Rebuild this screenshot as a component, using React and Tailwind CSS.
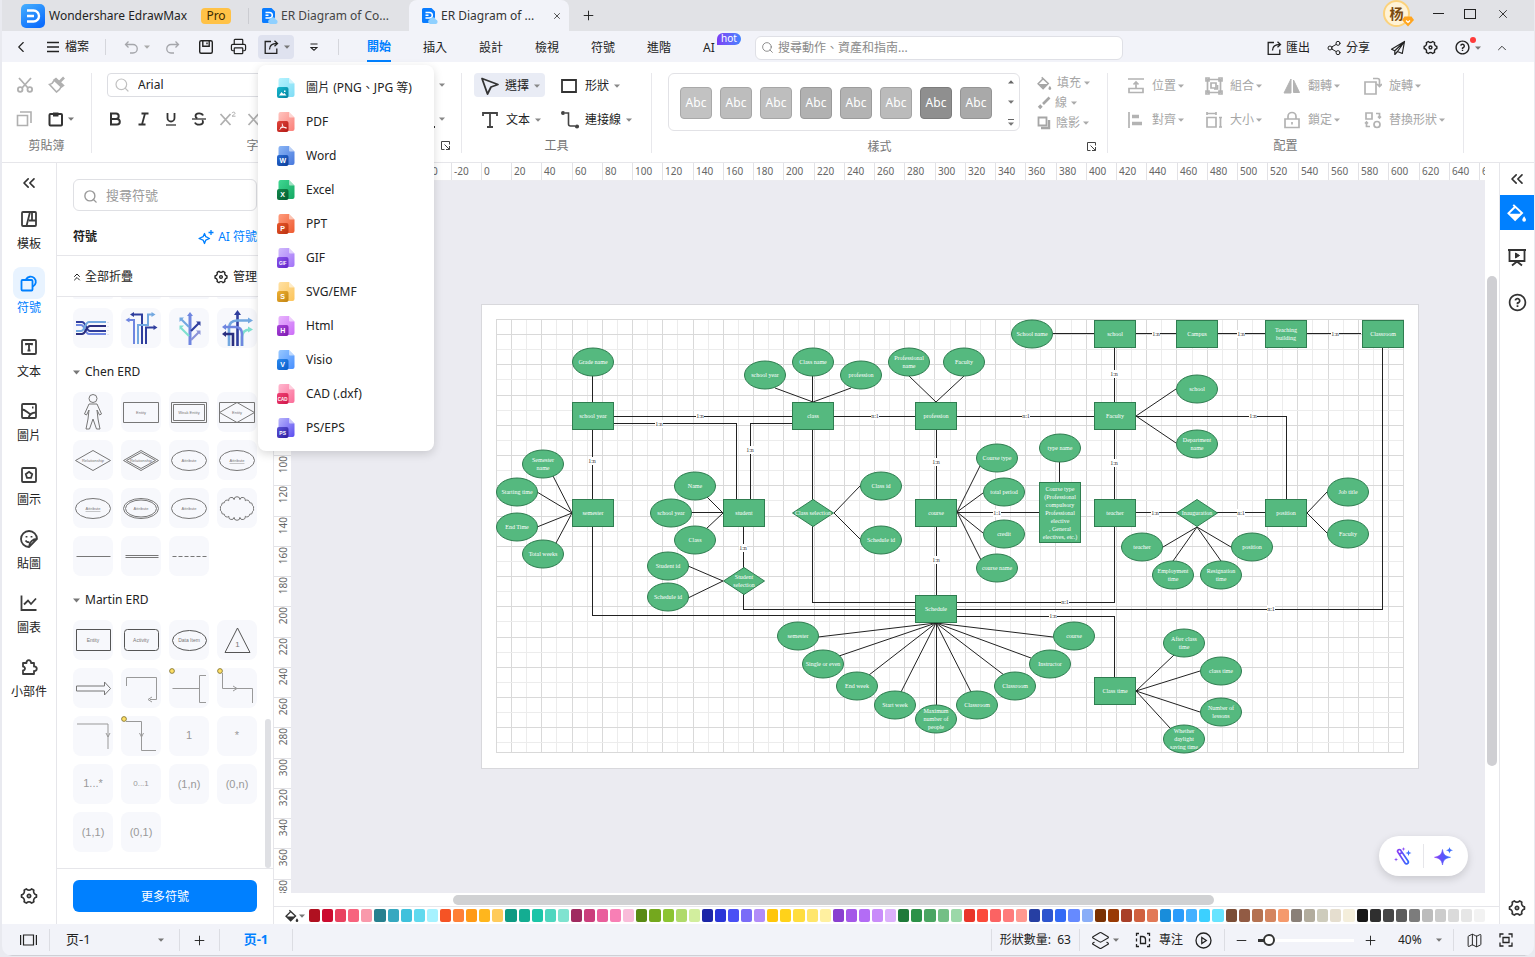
import {
    ChevronLeft,
    ChevronUp,
    ChevronsLeft,
    ChevronsUp,
    Layers2,
    Map as MapIcon,
    Minus,
    Plus,
    Printer,
    Search,
    Share2,
    X,
} from "lucide-react";
import { RiSettings4Line, RiQuestionLine } from "react-icons/ri";

/* ---------- small helpers ---------- */

const Svg = ({ w = 18, h = w, sw = 1.5, className = "", children }) => (
    <svg
        width={w}
        height={h}
        viewBox={`0 0 ${w} ${h}`}
        fill="none"
        stroke="currentColor"
        strokeWidth={sw}
        className={`shrink-0 ${className}`}
        aria-hidden="true"
    >
        {children}
    </svg>
);

const Caret = ({ className = "text-[#777]" }) => (
    <svg width="6" height="4" viewBox="0 0 6 4" className={`shrink-0 ${className}`} aria-hidden="true">
        <path d="M0 0.5h6L3 3.8z" fill="currentColor" />
    </svg>
);

const ExportIcon = () => (
    <Svg w={16} sw={1.3}>
        <path d="M8 2.5H2.2v11.8h11.6V9.5" />
        <path d="M6.5 10.5c0-4 2.5-6 7.5-6" />
        <path d="M11.5 1.8l3 2.7-3 2.7" />
    </Svg>
);

const BucketIcon = ({ size = 16 }) => (
    <svg width={size} height={size} viewBox="0 0 16 16" className="shrink-0" aria-hidden="true">
        <path d="M5 1.5l7 6.5-5.5 5.5L1.2 8.2 6.5 3" fill="none" stroke="currentColor" strokeWidth="1.6" />
        <path d="M2 8.5h9.5L6.5 13.2z" fill="currentColor" />
        <path d="M13.7 10.5c1 1.5 1.5 2.2 1.5 2.9a1.5 1.5 0 0 1-3 0c0-.7.5-1.4 1.5-2.9z" fill="currentColor" />
    </svg>
);

const Launcher = () => (
    <Svg w={9} sw={1} className="text-[#444]">
        <path d="M3.5 8.5h-3v-8h8v3" />
        <path d="M3.5 3.5l5 5M8.5 5v3.5H5" />
    </Svg>
);

/* ---------- title bar ---------- */

const DocIcon = () => (
    <svg width="16" height="16" viewBox="0 0 16 16" className="shrink-0" aria-hidden="true">
        <path d="M1.5 0h8L13 3.5V15H1.5A1.5 1.5 0 0 1 0 13.5V1.5A1.5 1.5 0 0 1 1.5 0z" fill="#0a7cff" />
        <path d="M3.5 4.5h4a2.8 2.8 0 0 1 0 5.6h-4M3.5 7.3h3" fill="none" stroke="#fff" strokeWidth="1.5" />
        <path d="M8 16a2.6 2.6 0 0 1 0-5 3.2 3.2 0 0 1 5.8.4A2.4 2.4 0 0 1 14 16z" fill="#8fd0ff" />
    </svg>
);

const TitleBar = () => (
    <header className="flex h-[31px] shrink-0 items-center bg-[#e1e2e6] pl-[19px] text-[#1f1f1f]">
        <svg width="24" height="24" viewBox="0 0 24 24" className="shrink-0" aria-hidden="true">
            <defs>
                <linearGradient id="logo" x1="0" y1="0" x2="0.6" y2="1">
                    <stop offset="0" stopColor="#45b0ff" />
                    <stop offset="1" stopColor="#0d6efd" />
                </linearGradient>
            </defs>
            <rect width="24" height="24" rx="5" fill="url(#logo)" />
            <path d="M6 6.5h6.5a5.5 5.5 0 0 1 0 11H6M6 12h7" fill="none" stroke="#fff" strokeWidth="2.4" />
        </svg>
        <h1 className="ml-1 w-[152px] whitespace-nowrap text-xs">Wondershare EdrawMax</h1>
        <span className="flex h-4 w-[30px] items-center justify-center rounded bg-[#ffc247] text-xs text-[#3d2a00]">Pro</span>
        <span className="ml-[17px] h-4 w-px bg-[#cbccd1]" />
        <button className="flex w-[160px] items-center gap-[3px] self-stretch pl-[13px] text-xs text-[#444]">
            <DocIcon />
            ER Diagram of Co...
        </button>
        <div className="flex w-[160px] items-center gap-[3px] self-stretch rounded-t-lg bg-[#f2f3f9] pl-[13px] text-xs text-[#333]">
            <DocIcon />
            <span className="grow">ER Diagram of ...</span>
            <button aria-label="Close tab" className="mr-[7px]">
                <X size={10} strokeWidth={2} />
            </button>
        </div>
        <button aria-label="New tab" className="ml-3">
            <Plus size={15} strokeWidth={1.5} />
        </button>
        <div className="ml-auto flex items-center pb-1 pr-6">
            <button aria-label="Account" className="relative mr-[22px] flex size-[27px] items-center justify-center rounded-full border-2 border-[#fbd27c] bg-[#fff3d6] text-sm font-bold text-[#7a4a10]">
                杨
                <svg width="12" height="11" viewBox="0 0 12 11" className="absolute -bottom-0.5 -right-1.5" aria-hidden="true">
                    <path d="M2.5.5h7L12 4l-6 6.500L0 4z" fill="#ffa51f" />
                    <path d="M4 4.500l2 2 2-2" fill="none" stroke="#fff" strokeWidth="1.2" />
                </svg>
            </button>
            <button aria-label="Minimize" className="mr-5 flex w-3 justify-center">
                <span className="h-px w-[11px] bg-[#222]" />
            </button>
            <button aria-label="Maximize" className="mr-5 h-[10px] w-3 border border-[#222]" />
            <button aria-label="Close">
                <X size={14} strokeWidth={1.5} />
            </button>
        </div>
    </header>
);

/* ---------- export menu ---------- */

const exportItems = [
    { label: "圖片 (PNG、JPG 等)", tag: "", page: ["#b5f3ff", "#7fdcf5"], badge: ["#16b9cf", "#06829f"] },
    { label: "PDF", tag: "", pdf: true, page: ["#ffc5c0", "#fb7f78"], badge: ["#e2453c", "#b31a15"] },
    { label: "Word", tag: "W", page: ["#8bb6f6", "#4878dd"], badge: ["#2b6bd4", "#0c3f99"] },
    { label: "Excel", tag: "X", page: ["#3fd792", "#15a862"], badge: ["#128a4d", "#055c30"] },
    { label: "PPT", tag: "P", page: ["#ff9c7d", "#ee5a30"], badge: ["#e8562b", "#bb3311"] },
    { label: "GIF", tag: "GIF", page: ["#d0bafc", "#a272f8"], badge: ["#8a54ec", "#6127c8"] },
    { label: "SVG/EMF", tag: "S", page: ["#ffe1a4", "#fcc45a"], badge: ["#eeb032", "#c28413"] },
    { label: "Html", tag: "H", page: ["#e8b5fd", "#cc6df8"], badge: ["#a944dc", "#7c1bae"] },
    { label: "Visio", tag: "V", page: ["#98c8ff", "#478fff"], badge: ["#2a8af0", "#0a5cc8"] },
    { label: "CAD (.dxf)", tag: "CAD", page: ["#ffb8cf", "#fb6c98"], badge: ["#f14276", "#cf1748"] },
    { label: "PS/EPS", tag: "PS", page: ["#b9b5fc", "#5a4cf0"], badge: ["#5a52d8", "#2f1f9e"] },
];

const FileIcon = ({ id, item }) => (
    <svg width="18" height="20" viewBox="0 0 18 20" className="shrink-0" aria-hidden="true">
        <defs>
            <linearGradient id={`page${id}`} x1="0" y1="0" x2="1" y2="1">
                <stop offset="0" stopColor={item.page[0]} />
                <stop offset="1" stopColor={item.page[1]} />
            </linearGradient>
            <linearGradient id={`badge${id}`} x1="0" y1="0" x2="1" y2="1">
                <stop offset="0" stopColor={item.badge[0]} />
                <stop offset="1" stopColor={item.badge[1]} />
            </linearGradient>
        </defs>
        <path d="M3.500 0H12l5.500 5.500V17a2 2 0 0 1-2 2h-12a2 2 0 0 1-2-2V2a2 2 0 0 1 2-2z" fill={`url(#page${id})`} />
        <path d="M12 0l5.500 5.500H13a1 1 0 0 1-1-1z" fill="#fff" opacity=".55" />
        <rect y="9" width="11.500" height="11" rx="2" fill={`url(#badge${id})`} />
        {id === 0 && <path d="M2 17.500l2.500-3.500 1.800 2 1-1 2.200 2.500z M7 12.500h1.500v1.500H7z" fill="#fff" />}
        {item.pdf && (
            <path d="M5.200 11.500c.8 2.500-.5 5-2.700 6M5.400 13c.5 2 2 3 4.200 3.200M3 16c2-.8 4-1 6.500-.3" fill="none" stroke="#fff" strokeWidth=".9" />
        )}
        <text
            x="5.700"
            y={item.tag.length > 1 ? 16.5 : 17.2}
            textAnchor="middle"
            fill="#fff"
            fontWeight="700"
            fontSize={item.tag.length > 2 ? 4.5 : item.tag.length > 1 ? 5 : 7}
            fontFamily="Liberation Sans, sans-serif"
        >
            {item.tag}
        </text>
    </svg>
);

const ExportMenu = () => (
    <ul className="absolute left-0 top-[30px] z-50 w-[176px] rounded-lg bg-white py-1.5 shadow-[0_3px_10px_rgba(0,0,0,0.15)]">
        {exportItems.map((item, i) => (
            <li key={item.label}>
                <button className="flex h-[34px] w-full items-center gap-[11px] whitespace-nowrap pl-[19px] text-xs text-[#222]">
                    <FileIcon id={i} item={item} />
                    {item.label}
                </button>
            </li>
        ))}
    </ul>
);

/* ---------- menu bar ---------- */

const MenuBar = () => (
    <nav className="flex h-[31px] shrink-0 items-center bg-[#f2f3f9] text-xs text-[#222]">
        <button aria-label="Back" className="ml-2.5">
            <ChevronLeft size={18} strokeWidth={1.5} />
        </button>
        <button className="ml-4 flex items-center gap-[5px]">
            <Svg w={14} sw={1.3}>
                <path d="M1 2.500h12M1 7h12M1 11.500h12" />
            </Svg>
            檔案
        </button>
        <span className="ml-4 h-4 w-px bg-[#d5d6dc]" />
        <button aria-label="Undo" className="ml-[18px] flex items-center gap-[6px] text-[#a5a6ab]">
            <Svg w={14} sw={1.3}>
                <path d="M4.500 1.500L1.500 4.500l3 3M1.800 4.500H9a3.500 3.500 0 0 1 0 8.500H6" />
            </Svg>
            <Caret className="text-[#aaa]" />
        </button>
        <button aria-label="Redo" className="ml-4 text-[#a5a6ab]">
            <Svg w={14} sw={1.3}>
                <path d="M9.500 1.500l3 3-3 3M12.200 4.500H5A3.500 3.500 0 0 0 5 13h3" />
            </Svg>
        </button>
        <button aria-label="Save" className="ml-[18px]">
            <Svg w={16} sw={1.4}>
                <rect x="1.700" y="1.700" width="12.600" height="12.600" rx="1.500" />
                <path d="M4.800 2v5.300h6.400V2M9 3.500v1.800" />
            </Svg>
        </button>
        <button aria-label="Print" className="ml-4">
            <Printer size={17} strokeWidth={1.7} />
        </button>
        <div className="relative ml-[11px]">
            <button aria-label="Export" aria-expanded="true" className="flex h-6 w-9 items-center gap-[5px] rounded bg-[#dfe2ef] pl-[5px]">
                <ExportIcon />
                <Caret />
            </button>
            <ExportMenu />
        </div>
        <button aria-label="Customize" className="ml-4">
            <Svg w={8} h={10} sw={1.1}>
                <path d="M.5 2h7M1 5.500l3 2.800 3-2.800z" />
            </Svg>
        </button>
        <span className="ml-5 h-4 w-px bg-[#d5d6dc]" />
        <div className="ml-3 flex self-stretch pt-0.5">
            <button className="flex w-14 justify-center font-bold text-[#0080ff]">
                <span className="flex h-[29px] items-center border-b-2 border-[#0080ff]">開始</span>
            </button>
            <button className="w-14">插入</button>
            <button className="w-14">設計</button>
            <button className="w-14">檢視</button>
            <button className="w-14">符號</button>
            <button className="w-14">進階</button>
            <button className="relative w-[68px] pl-4 text-left">
                AI
                <span className="absolute left-[30px] top-0 flex h-3 w-6 items-center justify-center rounded-md rounded-bl-none bg-linear-to-r from-[#7a3cf5] to-[#3f82ff] text-[10px] text-white">
                    hot
                </span>
            </button>
        </div>
        <label className="mt-0.5 flex h-6 w-[368px] shrink items-center gap-1 rounded-md border border-[#dfe0e6] bg-white px-[5px]">
            <Search size={13} strokeWidth={1.5} className="shrink-0 text-[#777]" />
            <input type="text" aria-label="Search" placeholder="搜尋動作、資產和指南..." className="w-full bg-transparent outline-none placeholder:text-[#8a8a8a]" />
        </label>
        <div className="ml-auto flex items-center whitespace-nowrap pr-[25px] pt-0.5">
            <button className="flex items-center gap-1">
                <ExportIcon />
                匯出
            </button>
            <button className="ml-4 flex items-center gap-1">
                <Share2 size={16} strokeWidth={1.5} />
                分享
            </button>
            <button aria-label="Send" className="ml-5">
                <Svg w={16} sw={1.2}>
                    <path d="M14.500 1.500L1.500 9.200l3.300 1.600L14.500 1.500 7.500 11.500l4.800 2zM4.800 10.800v3.700l2.700-3" strokeLinejoin="round" />
                </Svg>
            </button>
            <button aria-label="Settings" className="ml-4">
                <RiSettings4Line size={17} />
            </button>
            <button aria-label="Help" className="relative ml-[15px] flex items-center gap-1">
                <RiQuestionLine size={17} />
                <Caret />
                <span className="absolute -top-0.5 left-4 size-1.5 rounded-full bg-[#ff3b3b]" />
            </button>
            <button aria-label="Collapse ribbon" className="ml-[14px]">
                <ChevronUp size={14} strokeWidth={1.5} />
            </button>
        </div>
    </nav>
);

/* ---------- ribbon ---------- */

const Group = ({ className, label, launcher, children }) => (
    <section className={`flex shrink-0 flex-col ${className}`}>
        <div className="h-[59px]">{children}</div>
        <div className="relative mt-[7px] flex h-4 items-center justify-center text-[#777]">
            {label}
            {launcher && (
                <button aria-label="More" className="absolute right-[11px] top-[3px]">
                    <Launcher />
                </button>
            )}
        </div>
    </section>
);

const ToolButton = ({ className = "", caret = "ml-1 text-[#888]", icon, children }) => (
    <button className={`flex h-6 items-center whitespace-nowrap pt-0.5 ${className}`}>
        {icon}
        {children}
        <Caret className={caret} />
    </button>
);

const styleTiles = [
    "bg-[#c2c2c2] border-[#a9a9a9]",
    "bg-[#bdbdbd] border-[#a6a6a6]",
    "bg-[#bebebe] border-[#a6a6a6]",
    "bg-[#b1b1b1] border-[#9a9a9a]",
    "bg-[#b3b3b3] border-[#9c9c9c]",
    "bg-[#bbbbbb] border-[#a4a4a4]",
    "bg-[#8f8f8f] border-[#7c7c7c]",
    "bg-[#a9a9a9] border-[#949494]",
];

const arrangeItems = [
    {
        label: "位置",
        width: "w-[78px]",
        icon: <path d="M1 2h16M9 11V5M6.500 7.500L9 5l2.500 2.500M2 11.500h14v4H2z" />,
    },
    {
        label: "組合",
        width: "w-[78px]",
        icon: (
            <>
                <path d="M2.500 2.500h13v13h-13z" />
                <path d="M1 1h3v3H1zM14 1h3v3h-3zM1 14h3v3H1zM14 14h3v3h-3zM6 6h5v5H6z" />
                <path d="M9 12h3.500V8" />
            </>
        ),
    },
    {
        label: "翻轉",
        width: "w-[81px]",
        icon: <path d="M8 2v14H1zM10.500 3v12.500h6z" fill="currentColor" strokeWidth="1" />,
    },
    {
        label: "旋轉",
        width: "w-[70px]",
        icon: <path d="M1 5h11v12H1zM9 1.500h4.500a2 2 0 0 1 2 2V9M13 7l2.500 2.500L18 7" />,
    },
    {
        label: "對齊",
        width: "w-[78px]",
        icon: (
            <>
                <path d="M2 1v16" />
                <path d="M5 5.500h7M5 12.500h10" strokeWidth="3.500" />
            </>
        ),
    },
    {
        label: "大小",
        width: "w-[78px]",
        icon: <path d="M2 6.500h9V16H2zM2 2.500h9M2 1v3M11 1v3M15.500 7v9M14 6.500h3M14 16h3" />,
    },
    {
        label: "鎖定",
        width: "w-[81px]",
        icon: <path d="M2 8h14v8.500H2zM5 8V5.500a4 4 0 0 1 8 0V8M9 11v2.500" />,
    },
    {
        label: "替換形狀",
        width: "w-[90px]",
        icon: (
            <>
                <path d="M2 2h6v6H2zM12 2.500h3.500V7M14 5.500L15.500 7 17 5.500M6 15.500H2.500V11M1 12.500L2.500 11 4 12.500" />
                <circle cx="13" cy="13.500" r="3" />
            </>
        ),
    },
];

const Ribbon = () => (
    <div className="flex h-[101px] shrink-0 overflow-hidden border-b border-[#e6e6ea] bg-white pt-[11px] text-xs text-[#222]">
        <Group className="h-20 w-[90px] border-r border-[#e8e8ec]" label="剪貼簿">
            <div className="grid grid-cols-[32px_36px] gap-y-[10px] pl-[14px]">
                <button aria-label="Cut" className="flex h-6 items-center text-[#b0b0b0]">
                    <Svg w={18} sw={1.8}>
                        <path d="M3 2l9 10M15 2L6 12" />
                        <circle cx="4.200" cy="13.500" r="2.300" />
                        <circle cx="13.800" cy="13.500" r="2.300" />
                    </Svg>
                </button>
                <button aria-label="Format painter" className="flex h-6 items-center text-[#b0b0b0]">
                    <Svg w={18} sw={1.600}>
                        <path d="M16 1.500l-4.500 4.500" strokeWidth="2.600" />
                        <path d="M8 2.500l7.500 7-2 1.500-7.500-7z" fill="currentColor" />
                        <path d="M6 4.500C5 7 3.500 8 1.500 8.500l7 7.500c2-1 3.500-2.500 4.500-5" />
                    </Svg>
                </button>
                <button aria-label="Copy" className="flex h-6 items-center text-[#b0b0b0]">
                    <Svg w={18} sw={1.6}>
                        <path d="M1.500 5.500h10v10h-10zM4 2h11v11" />
                    </Svg>
                </button>
                <button aria-label="Paste" className="flex h-6 items-center gap-1 text-[#333]">
                    <Svg w={16} sw={2}>
                        <rect x="1.500" y="3" width="12.500" height="11.500" rx="1" />
                        <path d="M5 3.500h5.500" strokeWidth="4" />
                    </Svg>
                    <Caret />
                </button>
            </div>
        </Group>

        <Group className="h-20 w-[370px] border-r border-[#e8e8ec]" label="字體和對齊" launcher>
            <div className="flex items-center pl-[15px] pr-4">
                <label className="flex h-6 w-[200px] items-center gap-2 rounded border border-[#dcdde2] pl-1.5">
                    <Search size={16} strokeWidth={1.8} className="shrink-0 text-[#c0c0c0]" />
                    <input type="text" aria-label="Font" defaultValue="Arial" className="w-full bg-transparent outline-none" />
                </label>
                <Caret className="ml-auto text-[#888]" />
            </div>
            <div className="mt-[10px] flex h-6 items-center pl-[15px] pr-4 text-[#333]">
                <button aria-label="Bold" className="flex w-7">
                    <Svg w={16} sw={2}>
                        <path d="M4 2.500h5a2.700 2.700 0 0 1 0 5.400H4zM4 7.900h6a2.800 2.800 0 0 1 0 5.600H4z" />
                    </Svg>
                </button>
                <button aria-label="Italic" className="flex w-7">
                    <Svg w={16} sw={1.8}>
                        <path d="M6.500 2.500h7M3.500 13.500h7M10 2.500L7 13.500" />
                    </Svg>
                </button>
                <button aria-label="Underline" className="flex w-7">
                    <Svg w={16} sw={1.8}>
                        <path d="M4.500 2v5a3.500 3.500 0 0 0 7 0V2" />
                        <path d="M3 14h10" strokeWidth="1.3" />
                    </Svg>
                </button>
                <button aria-label="Strikethrough" className="flex w-7">
                    <Svg w={16} sw={1.8}>
                        <path d="M12 4.500C11 1.500 4.500 1.500 4.500 5c0 1 .5 1.800 1.800 2.300M4 11.500c1 3 8 3 8-.5 0-.8-.3-1.300-.8-1.800" />
                        <path d="M1 8h14" strokeWidth="1.3" />
                    </Svg>
                </button>
                <button aria-label="Superscript" className="flex w-7 text-[#b0b0b0]">
                    <Svg w={18} h={16} sw={1.8}>
                        <path d="M1.500 3l10 11M11.500 3l-10 11" />
                        <path d="M13 2.200c.4-1.600 3.400-1.200 3 .3-.3.900-2 1.500-3 2.700h3.500" strokeWidth="1" />
                    </Svg>
                </button>
                <button aria-label="Subscript" className="flex w-7 text-[#b0b0b0]">
                    <Svg w={18} h={16} sw={1.8}>
                        <path d="M1.500 3l10 11M11.500 3l-10 11" />
                    </Svg>
                </button>
                <span className="ml-auto mr-1 mt-4 size-0.5 bg-[#333]" />
                <Caret className="text-[#888]" />
            </div>
        </Group>

        <Group className="h-20 w-[190px] border-r border-[#e8e8ec]" label="工具">
            <div className="grid grid-cols-[80px_90px] gap-y-[10px] pl-3">
                <ToolButton
                    className="w-[71px] gap-[5px] rounded bg-[#e9ecf5] pl-1.5"
                    caret="text-[#888]"
                    icon={
                        <Svg w={20} h={20} sw={1.8} className="text-[#333]">
                            <path d="M2 2.500l16 6-7 2.500-3.500 7z" strokeLinejoin="round" />
                        </Svg>
                    }
                >
                    選擇
                </ToolButton>
                <ToolButton
                    className="gap-[7px] pl-1.5"
                    caret="-ml-0.5 text-[#888]"
                    icon={
                        <Svg w={18} sw={1.8} className="text-[#333]">
                            <path d="M2 3h14v12H2z" />
                        </Svg>
                    }
                >
                    形狀
                </ToolButton>
                <ToolButton
                    className="gap-[7px] pl-[7px]"
                    caret="-ml-0.5 text-[#888]"
                    icon={
                        <Svg w={18} sw={1.8} className="text-[#444]">
                            <path d="M2 5V2h14v3M9 2v14M6 16h6" />
                        </Svg>
                    }
                >
                    文本
                </ToolButton>
                <ToolButton
                    className="gap-[5px] pl-1.5"
                    caret="text-[#888]"
                    icon={
                        <Svg w={20} sw={1.6} className="text-[#444]">
                            <path d="M5 3h3.500v11a2 2 0 0 0 2 2H15" />
                            <circle cx="3" cy="3" r="1.200" fill="currentColor" />
                            <circle cx="17" cy="16.500" r="1.300" fill="currentColor" />
                        </Svg>
                    }
                >
                    連接線
                </ToolButton>
            </div>
        </Group>

        <Group className="h-20 w-[456px] border-r border-[#e8e8ec]" label="樣式" launcher>
            <div className="flex pl-4">
                <div className="flex h-[58px] w-[352px] items-center gap-2 rounded-md border border-[#e2e2e6] pl-[11px] pt-0.5">
                    {styleTiles.map((tile) => (
                        <button key={tile} className={`h-8 w-8 shrink-0 rounded border text-xs text-white ${tile}`}>
                            Abc
                        </button>
                    ))}
                    <div className="ml-2 flex h-[46px] flex-col items-center justify-between text-[#666]">
                        <button aria-label="Previous styles">
                            <Caret className="rotate-180" />
                        </button>
                        <button aria-label="Next styles">
                            <Caret />
                        </button>
                        <button aria-label="All styles" className="flex flex-col items-center gap-0.5">
                            <span className="h-px w-1.5 bg-[#666]" />
                            <Caret />
                        </button>
                    </div>
                </div>
                <div className="ml-[17px] flex flex-col text-[#a6a6a6]">
                    <button className="flex h-5 items-center gap-[5px]">
                        <BucketIcon size={15} />
                        填充
                        <Caret className="-ml-0.5 text-[#aaa]" />
                    </button>
                    <button className="flex h-5 items-center gap-1">
                        <Svg w={14} sw={2}>
                            <path d="M12.500 1.500L6 8" strokeWidth="2.600" />
                            <path d="M4.500 9.500L2 12" strokeWidth="3.400" />
                        </Svg>
                        線
                        <Caret className="text-[#aaa]" />
                    </button>
                    <button className="flex h-5 items-center gap-[5px]">
                        <Svg w={14} sw={1.8}>
                            <path d="M1.500 1.500h8v8h-8z" />
                            <path d="M4 12h8V4" strokeWidth="2.400" />
                        </Svg>
                        陰影
                        <Caret className="-ml-0.5 text-[#aaa]" />
                    </button>
                </div>
            </div>
        </Group>

        <Group className="h-20 w-[356px] border-r border-[#e8e8ec]" label="配置">
            <div className="flex flex-wrap gap-y-[10px] pl-[19px] text-[#a6a6a6]">
                {arrangeItems.map((item) => (
                    <ToolButton
                        key={item.label}
                        className={item.width}
                        caret="ml-0.5 text-[#aaa]"
                        icon={
                            <Svg w={18} sw={1.7} className="mr-[7px] text-[#b3b3b3]">
                                {item.icon}
                            </Svg>
                        }
                    >
                        {item.label}
                    </ToolButton>
                ))}
            </div>
        </Group>
    </div>
);

/* ---------- left rail ---------- */

const railItems = [
    {
        label: "模板",
        icon: (
            <>
                <rect x="2" y="2" width="14" height="14" rx="1" />
                <path d="M6.500 16L10 2M9 10.500h7M12 2v8" />
            </>
        ),
    },
    {
        label: "符號",
        active: true,
        icon: (
            <>
                <rect x="1.500" y="6" width="11" height="10.500" rx="1" />
                <path d="M6 5.500a5.200 5.200 0 1 1 7 7" />
            </>
        ),
    },
    {
        label: "文本",
        icon: (
            <>
                <rect x="2" y="2" width="14" height="14" rx="1" />
                <path d="M6 7.300V6h6v1.300M9 6v6.500M7.500 12.500h3" />
            </>
        ),
    },
    {
        label: "圖片",
        icon: (
            <>
                <rect x="2" y="2" width="14" height="14" rx="1" />
                <path d="M2 7.500c3 0 4.500 2.500 8 4.500M8.500 16c1-4 4-5.500 7.500-5.500M12 5.500h1.500" />
            </>
        ),
    },
    {
        label: "圖示",
        icon: (
            <>
                <rect x="2" y="2" width="14" height="14" rx="1" />
                <path d="M9 5.800l3.200 2.400-1.200 3.700H7L5.800 8.200z" />
            </>
        ),
    },
    {
        label: "貼圖",
        icon: (
            <>
                <path d="M17 9a8 8 0 1 0-8 8zM17 9c-4 0-8 3-8 8" />
                <path d="M6.500 6v1.500M11.500 6v1.500M5.500 10.500c1 1.500 2.500 2 4 1.500" />
            </>
        ),
    },
    {
        label: "圖表",
        icon: <path d="M1.500 1.500V16h15M4 10.500l4-4 3 3.500 5-5.500" />,
    },
    {
        label: "小部件",
        icon: <path d="M3 5h3.500a2.300 2.300 0 1 1 4.500 0H14v3.500a2.300 2.300 0 1 1 0 4.500v3H3v-3.500a2 2 0 1 0 0-4z" strokeLinejoin="round" />,
    },
];

const LeftRail = () => (
    <aside className="flex w-[55px] shrink-0 flex-col items-center border-r border-[#e6e6ea] bg-white pb-[18px] pt-[10px] text-xs text-[#222]">
        <button aria-label="Collapse" className="mb-[10px] text-[#333]">
            <ChevronsLeft size={20} strokeWidth={2} />
        </button>
        {railItems.map((item) => (
            <button key={item.label} className={`mb-1 flex h-[60px] flex-col items-center gap-px whitespace-nowrap ${item.active ? "text-[#0080ff]" : ""}`}>
                <span className={`flex size-8 items-center justify-center rounded-lg ${item.active ? "bg-[#e8f3ff]" : "text-[#3c3c3c]"}`}>
                    <Svg w={18} sw={1.8}>
                        {item.icon}
                    </Svg>
                </span>
                {item.label}
            </button>
        ))}
        <button aria-label="Settings" className="mt-auto text-[#333]">
            <RiSettings4Line size={20} />
        </button>
    </aside>
);

/* ---------- symbol library ---------- */

const T = ({ x = 20, y, size = 4, children, ...rest }) => (
    <text x={x} y={y} fontSize={size} textAnchor="middle" stroke="none" fill="#777" fontFamily="Liberation Sans, sans-serif" {...rest}>
        {children}
    </text>
);

const flowShapes = [
    <g key="a" strokeWidth="2">
        <path d="M3 14h6c4 0 4 9 8 9h16" stroke="#2f3e9e" />
        <path d="M3 17h5c4 0 4 9 8 9h17" stroke="#6f86e0" />
        <path d="M3 26h6c4 0 4-8 8-8h16" stroke="#2a2f80" />
        <path d="M3 23h5c4 0 4-9 8-9h17" stroke="#73a8e0" />
        <path d="M35 14v13" stroke="#c9cce0" strokeWidth="1" strokeDasharray="1 3" />
    </g>,
    <g key="b" strokeWidth="2">
        <path d="M13 36V12H8M17 36V17" stroke="#6f86e0" />
        <path d="M21 36V6.500H13" stroke="#2f3e9e" />
        <path d="M17 36V17h10V6.500h4" stroke="#73a8e0" />
        <path d="M25 36V19.500h8" stroke="#2f3e9e" />
        <path d="M13 4v5L9 6.500zM32.500 17v5l4-2.500z" fill="#2f3e9e" stroke="none" />
        <path d="M8.500 9.500v5l-4-2.500z" fill="#6f86e0" stroke="none" />
        <path d="M30.500 4v5l4-2.500z" fill="#73a8e0" stroke="none" />
    </g>,
    <g key="c" strokeWidth="2.200">
        <path d="M21 37V7" stroke="#6f86e0" strokeWidth="3" />
        <path d="M20 19l-8-8" stroke="#73a8e0" />
        <path d="M20 28l-8-8" stroke="#7fe0cf" />
        <path d="M22 23l8-8" stroke="#2f3e9e" />
        <path d="M22 32l8-8" stroke="#8b93d8" />
        <path d="M18 8l3-4 3 4z" fill="#6f86e0" stroke="none" />
        <path d="M10.500 14v-4.500H15z" fill="#73a8e0" stroke="none" />
        <path d="M10.500 22v-4.500H15z" fill="#7fe0cf" stroke="none" />
        <path d="M27 13.500h4.500V18z" fill="#2f3e9e" stroke="none" />
        <path d="M27 22.500h4.500V27z" fill="#8b93d8" stroke="none" />
    </g>,
    <g key="d" strokeWidth="2.600">
        <path d="M20.500 38V6" stroke="#2f3e9e" />
        <path d="M12 38V20q0-7 8-7.500h12" stroke="#73a8e0" />
        <path d="M25 38V29q0-7 8-7.500" stroke="#7fe0cf" />
        <path d="M25 38v-12q0-7-7-7H8" stroke="#6f86e0" />
        <path d="M16 38V26H8" stroke="#2a2f80" />
        <path d="M17 7l3.500-5L24 7z" fill="#2f3e9e" stroke="none" />
        <path d="M9 16v6l-4-3z" fill="#6f86e0" stroke="none" />
        <path d="M9 23v6l-4-3z" fill="#2a2f80" stroke="none" />
        <path d="M31 9.500v6l5-3z" fill="#73a8e0" stroke="none" />
        <path d="M31 18.500v6l5-3z" fill="#7fe0cf" stroke="none" />
    </g>,
];

// scalloped outline: small arcs between points that sit on an ellipse
const cloudPath = Array.from({ length: 19 }, (_, i) => {
    const a = (i / 18) * Math.PI * 2;
    const x = (20 + Math.cos(a) * 16.5).toFixed(1);
    const y = (20.5 + Math.sin(a) * 9).toFixed(1);
    return i === 0 ? `M${x} ${y}` : `A2.6 2.6 0 0 1 ${x} ${y}`;
}).join("");

const chenShapes = [
    <g key="person">
        <circle cx="20" cy="6.500" r="4" />
        <path d="M16 12h8l4.500 10-2 1-2.500-5 1 9 2 10h-3.500L20 27l-3.500 10H13l2-10 1-9-2.500 5-2-1z" />
    </g>,
    <g key="entity">
        <path d="M2.500 10.500h35v20h-35z" />
        <T y="22">Entity</T>
    </g>,
    <g key="weak">
        <path d="M2.500 10.500h35v20h-35zM4.500 12.500h31v16h-31z" />
        <T y="22">Weak Entity</T>
    </g>,
    <g key="assoc">
        <path d="M2.500 10.500h35v20h-35zM2.500 20.500l17.500-10 17.500 10-17.500 10z" />
        <T y="22">Entity</T>
    </g>,
    <g key="rel">
        <path d="M2.500 20.500l17.500-10 17.500 10-17.500 10z" />
        <T y="22">Relationship</T>
    </g>,
    <g key="rel2">
        <path d="M2.500 20.500l17.500-10 17.500 10-17.500 10z" />
        <path d="M5.500 20.500l14.500-8 14.500 8-14.500 8z" />
        <T y="22">Relationship</T>
    </g>,
    <g key="attr">
        <ellipse cx="20" cy="20.500" rx="17.500" ry="10" />
        <T y="22">Attribute</T>
    </g>,
    <g key="attrkey">
        <ellipse cx="20" cy="20.500" rx="17.500" ry="10" />
        <T y="22" textDecoration="underline">
            Attribute
        </T>
    </g>,
    <g key="attrkey2">
        <ellipse cx="20" cy="20.500" rx="17.500" ry="10" />
        <T y="22" textDecoration="underline">
            Attribute
        </T>
    </g>,
    <g key="multi">
        <ellipse cx="20" cy="20.500" rx="17.500" ry="10" />
        <ellipse cx="20" cy="20.500" rx="15.500" ry="8.500" />
        <T y="22">Attribute</T>
    </g>,
    <g key="attr3">
        <ellipse cx="20" cy="20.500" rx="17.500" ry="10" />
        <T y="22">Attribute</T>
    </g>,
    <path key="cloud" d={cloudPath} />,
    <path key="l1" d="M3.500 20.500h34" />,
    <path key="l2" d="M4.500 19.500h33M4.500 21.500h33" />,
    <path key="l3" d="M3.500 20.500h34" strokeDasharray="4 2" />,
];

const martinShapes = [
    <g key="entity" stroke="#555">
        <path d="M3.500 9.500h34v21h-34z" />
        <T y="22" size={5}>
            Entity
        </T>
    </g>,
    <g key="activity" stroke="#555">
        <rect x="3.500" y="9.500" width="34" height="21" rx="3" />
        <T y="22" size={5}>
            Activity
        </T>
    </g>,
    <g key="data" stroke="#555">
        <ellipse cx="20.500" cy="20.500" rx="17" ry="10" />
        <T y="22" size={5}>
            Data Item
        </T>
    </g>,
    <g key="tri" stroke="#555">
        <path d="M20.500 8L33 32.500H8z" />
        <T y="27" x="20.500" size={8}>
            1
        </T>
    </g>,
    <path key="arrow" d="M3.500 18h28v-4l6 6.500-6 6.500v-4h-28z" />,
    <path key="elbow" d="M5.500 18V9.500h30v22H29M31 29l-4 2.500 4 2.500" stroke="#999" />,
    <path key="fork" d="M3.500 20.500h27M37 7.500h-6.500v27H37" stroke="#999" />,
    <path key="step" d="M5.500 5v15.500h30V35M16 18l4 2.500-4 2.500" stroke="#999" />,
    <path key="down" d="M4 8h31v25M33 17l2 4 2-4" stroke="#999" />,
    <path key="z" d="M5 5.500h15.500v29H35M18.500 17l2 4 2-4" stroke="#999" />,
    <T key="t1" y="23" size={11} fill="#999">
        1
    </T>,
    <T key="t2" y="23" size={11} fill="#999">
        *
    </T>,
    <T key="t3" y="23" size={11} fill="#999">
        1...*
    </T>,
    <T key="t4" y="22" size={8} fill="#999">
        0...1
    </T>,
    <T key="t5" y="24" size={11} fill="#999">
        (1,n)
    </T>,
    <T key="t6" y="24" size={11} fill="#999">
        (0,n)
    </T>,
    <T key="t7" y="24" size={11} fill="#999">
        (1,1)
    </T>,
    <T key="t8" y="24" size={11} fill="#999">
        (0,1)
    </T>,
];

const handleTiles = ["fork", "step", "z"];

const ShapeGrid = ({ shapes }) => (
    <div className="grid grid-cols-[repeat(4,40px)] gap-2">
        {shapes.map((shape) => (
            <button key={shape.key} aria-label={shape.key} className="relative size-10 rounded-lg bg-[#f7f8fc]">
                <svg width="40" height="40" viewBox="0 0 40 40" fill="none" stroke="#777" strokeWidth="1" aria-hidden="true">
                    {shape}
                </svg>
                {handleTiles.includes(shape.key) && (
                    <svg width="6" height="6" viewBox="0 0 6 6" className="absolute left-0 top-0" aria-hidden="true">
                        <circle cx="3" cy="3" r="2.400" fill="#ffe066" stroke="#77692a" strokeWidth=".8" />
                    </svg>
                )}
            </button>
        ))}
    </div>
);

const SectionTitle = ({ children }) => (
    <h3 className="flex h-11 items-center gap-[5px] pt-1 text-xs">
        <svg width="7" height="5" viewBox="0 0 7 5" aria-hidden="true">
            <path d="M0 .5h7L3.500 4.500z" fill="#777" />
        </svg>
        {children}
    </h3>
);

const SymbolPanel = () => (
    <aside className="flex w-[216px] shrink-0 flex-col bg-white text-xs text-[#222]">
        <div className="px-4 pt-4">
            <label className="flex h-8 items-center gap-2 rounded-md border border-[#dfe0e4] px-[9px] pt-0.5">
                <Search size={15} strokeWidth={2.2} className="shrink-0 text-[#999]" />
                <input type="text" aria-label="搜尋符號" placeholder="搜尋符號" className="w-full bg-transparent text-[13px] outline-none placeholder:text-[#999]" />
            </label>
        </div>
        <div className="flex h-[45px] items-center justify-between border-b border-[#e6e6ea] px-4 pt-[7px]">
            <h2 className="font-bold">符號</h2>
            <button className="flex items-center gap-1 text-[#0080ff]">
                <Svg w={16} sw={1.3}>
                    <path d="M6.500 4.500l1.300 3.200L11.500 9.500l-3.700 1.600L6.500 14.500l-1.400-3.400L1 9.500l4.100-1.800z" strokeLinejoin="round" />
                    <path d="M13 1v5M10.500 3.500h5" />
                </Svg>
                AI 符號
            </button>
        </div>
        <div className="flex h-[41px] shrink-0 items-center justify-between border-b border-[#e6e6ea] px-4 pt-0.5">
            <button className="flex items-center">
                <ChevronsUp size={12} strokeWidth={2} className="-ml-0.5 mr-0.5" />
                全部折疊
            </button>
            <button className="flex items-center gap-1">
                <RiSettings4Line size={16} />
                管理
            </button>
        </div>
        <div className="flex min-h-0 flex-1 overflow-hidden">
            <div className="flex-1 pl-4">
                <div className="mb-[9px] grid grid-cols-[repeat(4,40px)] gap-2">
                    {[0, 1, 2, 3].map((i) => (
                        <span key={i} className="h-0.5 rounded-b-lg bg-[#f7f8fc]" />
                    ))}
                </div>
                <ShapeGrid shapes={flowShapes} />
                <SectionTitle>Chen ERD</SectionTitle>
                <ShapeGrid shapes={chenShapes} />
                <SectionTitle>Martin ERD</SectionTitle>
                <ShapeGrid shapes={martinShapes} />
            </div>
            <div className="mr-0.5 h-[149px] w-1.5 self-end rounded-full bg-[#dfe0e4]" />
        </div>
        <div className="shrink-0 border-t border-[#e6e6ea] px-4 pb-3 pt-[11px]">
            <button className="h-8 w-full rounded-md bg-[#0080ff] pt-0.5 text-white">更多符號</button>
        </div>
    </aside>
);

/* ---------- diagram ---------- */

const entities = [
    [593, 416, "school year"],
    [593, 513, "semester"],
    [744, 513, "student"],
    [813, 416, "class"],
    [936, 416, "profession"],
    [936, 513, "course"],
    [936, 609, "Schedule"],
    [1115, 334, "school"],
    [1197, 334, "Campus"],
    [1286, 334, "Teaching|building"],
    [1383, 334, "Classroom"],
    [1115, 416, "Faculty"],
    [1115, 513, "teacher"],
    [1286, 513, "position"],
    [1115, 691, "Class time"],
];

const relations = [
    [813, 513, "Class selection"],
    [744, 581, "Student|selection"],
    [1197, 513, "Inauguration"],
];

const attributes = [
    [593, 362, "Grade name"],
    [543, 464, "Semester|name"],
    [517, 492, "Starting time"],
    [517, 527, "End Time"],
    [543, 554, "Total weeks"],
    [695, 486, "Name"],
    [671, 513, "school year"],
    [695, 540, "Class"],
    [668, 566, "Student id"],
    [668, 597, "Schedule id"],
    [765, 375, "school year"],
    [813, 362, "Class name"],
    [861, 375, "profession"],
    [909, 362, "Professional|name"],
    [964, 362, "Faculty"],
    [1032, 334, "School name"],
    [997, 458, "Course type"],
    [1004, 492, "total period"],
    [1004, 534, "credit"],
    [997, 568, "course name"],
    [1060, 448, "type name"],
    [881, 486, "Class id"],
    [881, 540, "Schedule id"],
    [1197, 389, "school"],
    [1197, 444, "Department|name"],
    [1348, 492, "Job title"],
    [1348, 534, "Faculty"],
    [1142, 547, "teacher"],
    [1252, 547, "position"],
    [1173, 575, "Employment|time"],
    [1221, 575, "Resignation|time"],
    [1184, 643, "After class|time"],
    [1221, 671, "class time"],
    [1221, 712, "Number of|lessons"],
    [1184, 739, "Whether|daylight|saving time"],
    [798, 636, "semester"],
    [823, 664, "Single or even"],
    [857, 686, "End week"],
    [895, 705, "Start week"],
    [936, 719, "Maximum|number of|people"],
    [977, 705, "Classroom"],
    [1015, 686, "Classroom"],
    [1050, 664, "Instructor"],
    [1074, 636, "course"],
];

const wires = [
    "M592.5 375V615.5H915",
    "M614 416.5H1286.5V499",
    "M614 423.5H736.5V499",
    "M792 423.5H750.5V499",
    "M812.5 375V602.5H1114.5V334",
    "M743.5 527V609.5H1382.5V348",
    "M936.5 430V706",
    "M957 616.5H1114.5V677",
    "M957 512.5H1039",
    "M692 512.5H723",
    "M1059.5 462V482",
    "M1136 512.5H1265",
    "M1053 333.5H1361",
];

const spokes = [
    "M553 476L572 513L537 492M537 527L572 513L556 543",
    "M707 497L723 513L706 529",
    "M688 566L723 581L688 598",
    "M775 388L813 402L851 388",
    "M909 376L936 402L964 376",
    "M860 486L834 513L861 540",
    "M981 464L957 512L983 493M983 533L957 512L981 560",
    "M1176 389L1136 416L1176 443",
    "M1327 492L1307 513L1327 533",
    "M1163 547L1197 527L1231 547M1173 561L1197 527L1221 561",
    "M1174 655L1136 691L1200 671M1200 712L1136 691L1170 728",
    "M818 637L936 623L839 656M869 675L936 623L901 692M971 692L936 623L1004 675M1031 658L936 623L1053 637",
];

const cardinalities = [
    [592, 461, "1:n"],
    [700, 416, "1:n"],
    [659, 424, "1:n"],
    [750, 450, "1:n"],
    [875, 416, "n:1"],
    [1026, 416, "n:1"],
    [1253, 416, "1:n"],
    [1065, 602, "n:1"],
    [743, 548, "1:n"],
    [1271, 609, "n:1"],
    [1053, 616, "1:n"],
    [936, 462, "1:n"],
    [936, 560, "1:n"],
    [997, 513, "1:1"],
    [1155, 513, "1:n"],
    [1241, 513, "n:1"],
    [1156, 334, "1:n"],
    [1241, 334, "1:n"],
    [1335, 334, "1:n"],
    [1114, 374, "1:n"],
    [1114, 463, "1:n"],
];

const NodeText = ({ x, y, text }) => {
    const lines = text.split("|");
    return lines.map((line, i) => (
        <text key={i} x={x} y={y + 2 + (i - (lines.length - 1) / 2) * 8} textAnchor="middle" fill="#fff" stroke="none">
            {line}
        </text>
    ));
};

// grid lines fall every 10 units, the odd ones are drawn lighter
const gridX = Array.from({ length: 59 }, (_, i) => 496 + Math.round((i + 1) * 15.12));
const gridY = Array.from({ length: 28 }, (_, i) => 319 + Math.round((i + 1) * 15.12));

const Diagram = () => (
    <svg
        width="938"
        height="465"
        viewBox="481 304 938 465"
        fontSize="6"
        fontFamily="Liberation Serif, serif"
        role="img"
        aria-label="ER diagram"
        className="shrink-0"
    >
        <rect x="481.500" y="304.500" width="937" height="464" fill="#fff" stroke="#d8d8dc" />
        <g shapeRendering="crispEdges" fill="none">
            {gridX.map((x, i) => (
                <path key={x} d={`M${x + 0.5} 319V753`} stroke={i % 2 ? "#ececec" : "#d9d9d9"} />
            ))}
            {gridY.map((y, i) => (
                <path key={y} d={`M496 ${y + 0.5}H1404`} stroke={i % 2 ? "#ececec" : "#d9d9d9"} />
            ))}
            <rect x="496.500" y="319.500" width="907" height="433" stroke="#d9d9d9" />
        </g>
        <g fill="none" stroke="#222">
            {spokes.map((d) => (
                <path key={d} d={d} />
            ))}
            <g shapeRendering="crispEdges">
                {wires.map((d) => (
                    <path key={d} d={d} />
                ))}
            </g>
        </g>
        {cardinalities.map(([x, y, text]) => (
            <g key={`${x}-${y}`}>
                <rect x={x - 4} y={y - 4} width="8" height="8" fill="#fff" />
                <text x={x} y={y + 2} textAnchor="middle" fill="#333">
                    {text}
                </text>
            </g>
        ))}
        <g fill="#55b97f" stroke="#2f7d50">
            {entities.map(([x, y, text]) => (
                <g key={`${x}-${y}`}>
                    <rect x={x - 20.5} y={y - 13.5} width="41" height="27" />
                    <NodeText x={x} y={y} text={text} />
                </g>
            ))}
            {relations.map(([x, y, text]) => (
                <g key={text}>
                    <path d={`M${x - 20.5} ${y}L${x} ${y - 13.5}L${x + 20.5} ${y}L${x} ${y + 13.5}z`} />
                    <NodeText x={x} y={y} text={text} />
                </g>
            ))}
            {attributes.map(([x, y, text]) => (
                <g key={`${x}-${y}`}>
                    <ellipse cx={x} cy={y} rx="20.500" ry="14" />
                    <NodeText x={x} y={y} text={text} />
                </g>
            ))}
            <rect x="1039.500" y="482.500" width="41" height="60" />
            <NodeText x={1060} y={513} text="Course type|(Professional|compulsory|Professional|elective|, General|electives, etc.)" />
        </g>
    </svg>
);

/* ---------- workspace ---------- */

const hTicks = Array.from({ length: 40 }, (_, i) => (i - 6) * 20);
const vTicks = Array.from({ length: 24 }, (_, i) => (i - 4) * 20);

// 20 units measure 30.25px, so every fourth tick takes the extra pixel
const isWide = (v) => (((v / 20) % 4) + 4) % 4 === 2;

const HorizontalRuler = () => (
    <div className="mr-[14px] flex h-[18px] shrink-0 overflow-hidden border-b border-[#ececf0] bg-white pl-[25px] text-[10px] text-[#666]">
        {hTicks.map((v) => (
            <span key={v} className={`flex shrink-0 items-center border-l border-[#e2e2e6] pl-0.5 ${isWide(v) ? "w-[31px]" : "w-[30px]"}`}>
                {v}
            </span>
        ))}
    </div>
);

const VerticalRuler = () => (
    <div className="flex w-[17px] shrink-0 flex-col overflow-hidden bg-white pt-0.5 text-[10px] leading-[16px] text-[#666]">
        {vTicks.map((v) => (
            <span key={v} className={`flex shrink-0 justify-center border-t border-[#e2e2e6] ${isWide(v) ? "h-[31px]" : "h-[30px]"}`}>
                <span className="h-max rotate-180 [writing-mode:vertical-rl]">{v}</span>
            </span>
        ))}
    </div>
);

const swatches = [
    "bg-[#b01020]", "bg-[#cc0b2f]", "bg-[#e9415f]", "bg-[#f7637e]", "bg-[#f999ab]",
    "bg-[#27808f]", "bg-[#36a8c0]", "bg-[#3fc1dc]", "bg-[#60d9ee]", "bg-[#a6f2ff]",
    "bg-[#f55325]", "bg-[#ff7f37]", "bg-[#ff9a17]", "bg-[#ffb61d]", "bg-[#ffcb5c]",
    "bg-[#0e9a83]", "bg-[#14ad92]", "bg-[#1cc5a8]", "bg-[#4fd6bf]", "bg-[#7fe3d0]",
    "bg-[#a02a60]", "bg-[#cb3e7c]", "bg-[#e95f9c]", "bg-[#f87fb5]", "bg-[#f9bcd9]",
    "bg-[#5a8a14]", "bg-[#74a81e]", "bg-[#8cc432]", "bg-[#b0da6b]", "bg-[#d2ee9e]",
    "bg-[#1c25a8]", "bg-[#2a35d8]", "bg-[#4a50f5]", "bg-[#7a6cf8]", "bg-[#b18cf8]",
    "bg-[#ffc60a]", "bg-[#ffd21a]", "bg-[#ffdd3e]", "bg-[#ffe66c]", "bg-[#fff0a0]",
    "bg-[#8a3fd0]", "bg-[#a458e8]", "bg-[#b36cf5]", "bg-[#c98cfa]", "bg-[#dcb0fc]",
    "bg-[#1f7a3a]", "bg-[#2c9148]", "bg-[#4aa562]", "bg-[#73bf85]", "bg-[#9bd8a8]",
    "bg-[#e93529]", "bg-[#fb4a3b]", "bg-[#fb6363]", "bg-[#ff7b7b]", "bg-[#ff9890]",
    "bg-[#263fa3]", "bg-[#2d55cf]", "bg-[#336af5]", "bg-[#668aff]", "bg-[#8aaef8]",
    "bg-[#7a3103]", "bg-[#993a05]", "bg-[#a93f29]", "bg-[#d06040]", "bg-[#e27958]",
    "bg-[#198ddb]", "bg-[#2b9cfb]", "bg-[#44b1ff]", "bg-[#3cd0ff]", "bg-[#67e4ff]",
    "bg-[#7b4e37]", "bg-[#925b44]", "bg-[#b57251]", "bg-[#d4855f]", "bg-[#f59a6d]",
    "bg-[#8a8078]", "bg-[#b2ac9d]", "bg-[#ceccbc]", "bg-[#e5decf]", "bg-[#f4eedb]",
    "bg-[#181818]", "bg-[#2f2f2f]", "bg-[#464646]", "bg-[#5c5c5c]", "bg-[#7c7c7c]",
    "bg-[#bcbcbc]", "bg-[#cccccc]", "bg-[#dadada]", "bg-[#e6e6e6]", "bg-[#f2f2f2]", "bg-[#ffffff]",
];

const AiPill = () => (
    <div className="absolute bottom-[17px] right-[17px] flex h-10 w-[89px] items-center justify-center gap-[10px] rounded-full bg-white shadow-[0_3px_8px_rgba(0,0,0,0.15)]">
        <svg width="0" height="0" className="absolute" aria-hidden="true">
            <linearGradient id="ai" x1="0" y1="0" x2="1" y2="0">
                <stop offset="0" stopColor="#8a3cf5" />
                <stop offset="1" stopColor="#2f6bff" />
            </linearGradient>
        </svg>
        <button aria-label="AI tools">
            <svg width="20" height="20" viewBox="0 0 20 20" aria-hidden="true">
                <path d="M4.500 5.500a1.800 1.800 0 0 1 3-1.500l7.500 11a1.800 1.800 0 0 1-3 2zM6 8.500l3-2" fill="none" stroke="url(#ai)" strokeWidth="1.700" />
                <path d="M15.500 4l.8 2.200 2.200.8-2.200.8-.8 2.200-.8-2.200-2.200-.8 2.200-.8z" fill="#3f6fff" />
                <path d="M10.500 1l.5 1.500 1.500.5-1.500.5-.5 1.500-.5-1.500L8.500 3l1.500-.5zM3 11.500l.6 1.500 1.500.5-1.500.5L3 15.500 2.500 14 1 13.500l1.500-.5z" fill="#8a4cf5" />
            </svg>
        </button>
        <span className="h-6 w-px bg-[#e6e6ea]" />
        <button aria-label="AI assistant">
            <svg width="20" height="20" viewBox="0 0 20 20" aria-hidden="true">
                <path d="M8.500 3.500c1 5 2 6.500 8 7.800-6 1.200-7 2.700-8 7.700-1-5-2.500-6.500-8-7.700 5.500-1.300 7-2.800 8-7.800z" fill="url(#ai)" stroke="url(#ai)" strokeWidth=".6" />
                <path d="M15.500 1c.5 2 1 2.700 3.500 3.200-2.500.6-3 1.300-3.500 3.300-.5-2-1-2.700-3.500-3.300 2.500-.5 3-1.200 3.500-3.200z" fill="#3f6fff" />
            </svg>
        </button>
    </div>
);

const Workspace = () => (
    <main className="flex min-w-0 flex-1 flex-col border-l border-[#e6e6ea] bg-white">
        <HorizontalRuler />
        <div className="flex min-h-0 flex-1">
            <VerticalRuler />
            <div className="relative min-w-0 flex-1 overflow-hidden bg-[#ebebf1] pl-[190px] pt-[123px]">
                <Diagram />
                <AiPill />
            </div>
            <div className="w-[14px] shrink-0 px-0.5 pt-[95px]">
                <div className="h-[490px] rounded-full bg-[#cfcfd3]" />
            </div>
        </div>
        <div className="h-[14px] shrink-0 border-b border-[#e6e6ea] pl-[179px] pt-0.5">
            <div className="h-2.5 w-[761px] rounded-full bg-[#d0d1d3]" />
        </div>
        <div className="flex h-[17px] shrink-0 items-center gap-0.5 pl-[11px]">
            <button aria-label="Fill color" className="flex w-[22px] items-center text-[#333]">
                <BucketIcon size={14} />
                <Caret />
            </button>
            {swatches.map((color) => (
                <button key={color} aria-label="Color" className={`h-[13px] flex-1 rounded-xs ${color}`} />
            ))}
        </div>
    </main>
);

const RightRail = () => (
    <aside className="flex w-[35px] shrink-0 flex-col items-center border-l border-[#e6e6ea] bg-white pb-[6px] pt-[6px] text-[#333]">
        <button aria-label="Expand">
            <ChevronsLeft size={20} strokeWidth={2} />
        </button>
        <button aria-label="Format" className="mt-1.5 flex h-[35px] w-full items-center justify-center bg-[#0080ff] text-white">
            <BucketIcon size={20} />
        </button>
        <button aria-label="Presentation" className="mt-[17px]">
            <Svg w={20} sw={1.8}>
                <path d="M1 3h18M2.500 3v11h15V3M5 18.500l5-4 5 4" />
                <path d="M8.500 6l4 2.500-4 2.500z" fill="currentColor" strokeWidth="1" />
            </Svg>
        </button>
        <button aria-label="Help" className="mt-[25px]">
            <RiQuestionLine size={21} />
        </button>
        <button aria-label="Settings" className="mt-auto">
            <RiSettings4Line size={20} />
        </button>
    </aside>
);

/* ---------- status bar ---------- */

const Divider = ({ className = "" }) => <span className={`h-[22px] w-px shrink-0 bg-[#dcdde3] ${className}`} />;

const StatusBar = () => (
    <footer className="flex h-8 shrink-0 items-center border-b border-[#cfd0d6] bg-[#f2f3f9] pt-px text-xs text-[#222]">
        <button aria-label="Page list" className="ml-[18px]">
            <Svg w={17} h={12} sw={1.2}>
                <path d="M.6 1v10M16.400 1v10M3.500 1h10v10h-10z" />
            </Svg>
        </button>
        <Divider className="ml-3" />
        <label className="ml-4 flex w-[98px] items-center justify-between text-[13px]">
            <select aria-label="Page" className="w-20 appearance-none bg-transparent outline-none">
                <option>页-1</option>
            </select>
            <Caret />
        </label>
        <Divider className="ml-[15px]" />
        <button aria-label="Add page" className="mx-3">
            <Plus size={15} strokeWidth={1.5} />
        </button>
        <Divider />
        <button className="w-[72px] text-[13px] font-bold text-[#0080ff]">页-1</button>
        <Divider />
        <Divider className="ml-auto" />
        <p className="mx-2 whitespace-nowrap">形狀數量:&nbsp; 63</p>
        <Divider />
        <button aria-label="Layers" className="ml-[11px] flex items-center gap-[3px]">
            <Layers2 size={19} strokeWidth={1.4} />
            <Caret />
        </button>
        <button className="ml-4 flex items-center gap-2 whitespace-nowrap">
            <Svg w={16} sw={1.3}>
                <path d="M4 1.500H1.500V4M12 1.500h2.500V4M4 14.500H1.500V12M12 14.500h2.500V12M1.500 6.500v3M14.500 6.500v3M5.500 4.500h2a3 3 0 0 1 3 3v4h-5z" />
            </Svg>
            專注
        </button>
        <button aria-label="Play" className="ml-3">
            <Svg w={17} sw={1.3}>
                <circle cx="8.500" cy="8.500" r="7.500" />
                <path d="M6.800 5.500l4.500 3-4.500 3z" />
            </Svg>
        </button>
        <Divider className="ml-3" />
        <button aria-label="Zoom out" className="ml-[9px]">
            <Minus size={15} strokeWidth={1.5} />
        </button>
        <input
            type="range"
            aria-label="Zoom"
            min="0"
            max="100"
            defaultValue="6"
            className="ml-[9px] h-[3px] w-[96px] appearance-none bg-linear-to-r from-[#333] from-10% to-white to-10% [&::-webkit-slider-thumb]:size-3 [&::-webkit-slider-thumb]:appearance-none [&::-webkit-slider-thumb]:rounded-full [&::-webkit-slider-thumb]:border-2 [&::-webkit-slider-thumb]:border-[#333] [&::-webkit-slider-thumb]:bg-white"
        />
        <button aria-label="Zoom in" className="ml-[9px]">
            <Plus size={15} strokeWidth={1.5} />
        </button>
        <label className="ml-5 flex w-11 items-center justify-between">
            <select aria-label="Zoom level" className="w-8 appearance-none bg-transparent outline-none">
                <option>40%</option>
            </select>
            <Caret />
        </label>
        <Divider className="ml-[11px]" />
        <button aria-label="Overview" className="ml-3">
            <MapIcon size={17} strokeWidth={1.4} />
        </button>
        <button aria-label="Fit page" className="ml-4 mr-[21px]">
            <Svg w={14} sw={1.3}>
                <path d="M4.500 1H1v3.500M9.500 1H13v3.500M4.500 13H1V9.500M9.500 13H13V9.500M4 4.500h6v5H4z" />
            </Svg>
        </button>
    </footer>
);

const App = () => {
    return (
        <div className="h-screen bg-[#e9eaf0] pb-px pl-0.5 pr-px font-['Noto_Sans','Noto_Sans_CJK_TC',sans-serif]">
            <div className="flex h-full flex-col overflow-hidden rounded-b-[10px]">
                <TitleBar />
                <MenuBar />
                <Ribbon />
                <div className="flex min-h-0 flex-1">
                    <LeftRail />
                    <SymbolPanel />
                    <Workspace />
                    <RightRail />
                </div>
                <StatusBar />
            </div>
        </div>
    );
};

export default App;
